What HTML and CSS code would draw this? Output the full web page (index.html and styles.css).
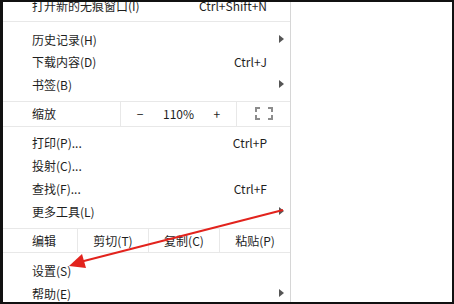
FILE: index.html
```html
<!DOCTYPE html>
<html>
<head>
  <meta charset="utf-8">
  <title>菜单</title>
  <link rel="stylesheet" href="styles.css">
</head>
<body>
  <div class="frame">
    <div class="menu">
      <div class="item">
        <span class="label">打开新的无痕窗口(I)</span>
        <span class="shortcut">Ctrl+Shift+N</span>
        <span class="sub"></span>
      </div>

      <div class="sep sep-top"></div>

      <div class="group-first">
        <div class="item">
          <span class="label">历史记录(H)</span>
          <span class="sub"><svg width="5" height="8" viewBox="0 0 5 8"><polygon points="0,0 5,4 0,8" /></svg></span>
        </div>
        <div class="item">
          <span class="label">下载内容(D)</span>
          <span class="shortcut">Ctrl+J</span>
          <span class="sub"></span>
        </div>
        <div class="item">
          <span class="label">书签(B)</span>
          <span class="sub"><svg width="5" height="8" viewBox="0 0 5 8"><polygon points="0,0 5,4 0,8" /></svg></span>
        </div>
      </div>

      <div class="zoom-row">
        <span class="row-label zoom-label">缩放</span>
        <div class="zoom-ctrl">
          <span>−</span>
          <span>110%</span>
          <span>+</span>
        </div>
        <div class="fullscreen">
          <svg width="18" height="13" viewBox="0 0 18 13">
            <path d="M1 5V1h4M13 1h4v4M17 8v4h-4M5 12H1V8" />
          </svg>
        </div>
      </div>

      <div class="group">
        <div class="item">
          <span class="label">打印(P)...</span>
          <span class="shortcut">Ctrl+P</span>
          <span class="sub"></span>
        </div>
        <div class="item">
          <span class="label">投射(C)...</span>
          <span class="sub"></span>
        </div>
        <div class="item">
          <span class="label">查找(F)...</span>
          <span class="shortcut">Ctrl+F</span>
          <span class="sub"></span>
        </div>
        <div class="item">
          <span class="label">更多工具(L)</span>
          <span class="sub"><svg width="5" height="8" viewBox="0 0 5 8"><polygon points="0,0 5,4 0,8" /></svg></span>
        </div>
      </div>

      <div class="edit-row">
        <span class="row-label edit-label">编辑</span>
        <span class="edit-btn">剪切(T)</span>
        <span class="edit-btn">复制(C)</span>
        <span class="edit-btn">粘贴(P)</span>
      </div>

      <div class="group group-last">
        <div class="item">
          <span class="label">设置(S)</span>
          <span class="sub"></span>
        </div>
        <div class="item">
          <span class="label">帮助(E)</span>
          <span class="sub"><svg width="5" height="8" viewBox="0 0 5 8"><polygon points="0,0 5,4 0,8" /></svg></span>
        </div>
      </div>
    </div>

    <!-- red annotation arrow drawn over the menu -->
    <svg class="pointer" width="454" height="304" viewBox="0 0 454 304">
      <line x1="283" y1="210" x2="80" y2="262" />
      <polygon points="69,266 82,254 86,268" />
    </svg>
  </div>
</body>
</html>
```

FILE: styles.css
```css
body {
  margin: 0;
  width: 454px;
  height: 304px;
  overflow: hidden;
  font-family: "Noto Sans CJK SC", "Noto Sans", sans-serif;
  font-size: 12px;
  color: #1e1e1e;
  background: #fff;
}

.frame {
  position: relative;
  box-sizing: border-box;
  width: 454px;
  height: 304px;
  border: 2px solid #111;
  border-left-width: 3px;
  background: #fff;
  overflow: hidden;
}

.menu {
  width: 288px;
  height: 320px;
  margin-top: -8px;
  box-sizing: border-box;
  border-right: 1px solid #d6d6d6;
}

.item {
  display: flex;
  align-items: center;
  height: 23px;
  padding: 0 6px 0 29px;
}

.group-first .item {
  height: 22.5px;
}

.label {
  flex: 1;
  white-space: nowrap;
}

.shortcut {
  white-space: nowrap;
}

.sub {
  width: 17px;
  display: flex;
  justify-content: flex-end;
  align-items: center;
}

.sub svg {
  fill: #555;
}

.sep {
  height: 1px;
  background: #e8e8e8;
}

.sep-top {
  margin: 4px 0 6px;
}

.zoom-row,
.edit-row {
  display: flex;
  align-items: stretch;
  margin-top: 4px;
  border-top: 1px solid #e8e8e8;
  border-bottom: 1px solid #e8e8e8;
}

.zoom-row {
  height: 24px;
  margin-top: 5px;
}

.edit-row {
  height: 23px;
  margin-top: 5px;
}

.row-label {
  display: flex;
  align-items: center;
  padding-left: 29px;
  box-sizing: border-box;
  border-right: 1px solid #e8e8e8;
}

.zoom-label {
  width: 118px;
}

.zoom-ctrl {
  width: 115px;
  display: grid;
  grid-template-columns: 1fr 1fr 1fr;
  align-items: center;
  justify-items: center;
  border-right: 1px solid #e8e8e8;
}

.fullscreen {
  flex: 1;
  display: flex;
  align-items: center;
  justify-content: center;
}

.fullscreen svg path {
  fill: none;
  stroke: #8c8c8c;
  stroke-width: 2;
}

.edit-label {
  width: 75px;
}

.edit-btn {
  flex: 1;
  display: flex;
  align-items: center;
  justify-content: center;
  border-right: 1px solid #e8e8e8;
}

.edit-btn:last-child {
  border-right: none;
}

.group {
  margin-top: 4px;
}

.group-last {
  margin-top: 6px;
}

.pointer {
  position: absolute;
  left: -3px;
  top: -2px;
}

.pointer line {
  stroke: #e2231d;
  stroke-width: 2;
}

.pointer polygon {
  fill: #e2231d;
}
```
